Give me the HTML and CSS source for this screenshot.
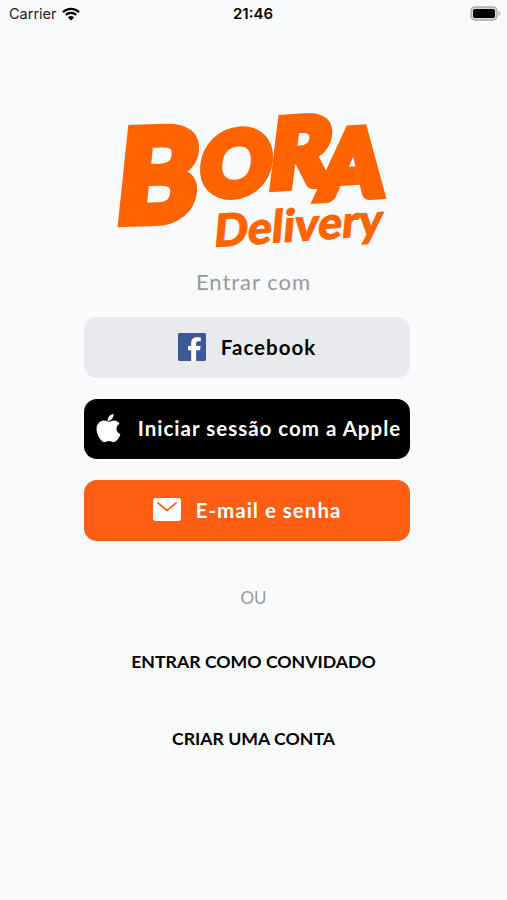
FILE: index.html
```html
<!DOCTYPE html>
<html lang="pt-BR">
<head>
    <meta charset="UTF-8">
    <meta name="viewport" content="width=device-width, initial-scale=1.0">
    <title>Bora Delivery</title>
    <link rel="stylesheet" href="styles.css">
</head>
<body>

    <!-- Status bar -->
    <header class="status-bar">
        <div class="carrier">
            <span>Carrier</span>
            <svg class="wifi" viewBox="0 0 18 14" width="18" height="14">
                <path d="M1 5.2a11.4 11.4 0 0 1 16 0M3.8 8a7.4 7.4 0 0 1 10.4 0" fill="none" stroke="#000" stroke-width="2.3"/>
                <path d="M9 13.6L5.9 10.4a4.5 4.5 0 0 1 6.2 0z"/>
            </svg>
        </div>
        <span class="time">21:46</span>
        <svg class="battery" viewBox="0 0 31 15" width="31" height="15">
            <rect x="1" y="1" width="26" height="13" rx="4" fill="#dcdcdc" stroke="#aaa" stroke-width="1.4"/>
            <rect x="3" y="3" width="22" height="9" rx="1.8"/>
            <path d="M28.7 5.2v4.6a2.5 2.5 0 0 0 0-4.6z" fill="#aaa"/>
        </svg>
    </header>

    <main class="login">
        <svg class="logo" viewBox="112 105 284 150" width="284" height="150">
            <g class="logo-name">
                <text class="big" transform="translate(113 223) rotate(-2) skewX(-8) scale(.96 1)">B</text>
                <text class="o" transform="translate(199 197) rotate(-4) skewX(-9)">O</text>
                <text class="r" transform="translate(267 188) rotate(-4) skewX(-11)">R</text>
                <text class="a" transform="translate(318 199) rotate(-4) skewX(-10) scale(.96 1)">A</text>
            </g>
            <text class="logo-sub" transform="translate(213 247) rotate(-4) skewX(-9)" textLength="169" lengthAdjust="spacingAndGlyphs">Delivery</text>
        </svg>

        <p class="hint">Entrar com</p>

        <!-- Login options -->
        <div class="options">
            <button class="btn facebook">
                <svg viewBox="0 0 28 28" width="28" height="28">
                    <rect width="28" height="28" rx="1.6" fill="#3b5998"/>
                    <path d="M13.200 28V17.200H10V13h3.200V10c0-3.700 2.300-5.700 6-5.700 1.500 0 3 .1 3.600.2v3.800h-2.400c-1.800 0-2.300.8-2.300 2.100V13h4.500l-.6 4.200h-3.900V28z" fill="#fff"/>
                </svg>
                <span>Facebook</span>
            </button>
            <button class="btn apple">
                <svg viewBox="0 0 25 28" width="25" height="28">
                    <path d="M17.500 0c.2 2-.6 3.700-1.600 4.900-1 1.200-2.600 2.100-4.200 2-.2-1.900.7-3.700 1.700-4.800C14.500.9 16.200.1 17.500 0z" fill="#fff"/>
                    <path d="M23.500 9.700c-1.800 1.100-3 2.800-3 5.100 0 2.500 1.500 4.600 3.900 5.500-.5 1.500-1.200 2.900-2.100 4.200-1.300 1.900-2.600 3.500-4.500 3.500s-2.500-1.100-4.800-1.100c-2.200 0-3 1.100-4.800 1.200-1.900.1-3.300-1.900-4.600-3.800C1 20.500-.9 13.800 2 9.900c1.300-2 3.500-3.300 5.800-3.300 2.200 0 3.600 1.200 5.100 1.200s2.900-1.400 5.500-1.300c2 .1 3.900 1.200 5.100 3.200z" fill="#fff"/>
                </svg>
                <span>Iniciar sessão com a Apple</span>
            </button>
            <button class="btn email">
                <svg viewBox="0 0 28 23" width="28" height="23">
                    <rect width="28" height="23" rx="3" fill="#fff"/>
                    <path d="M5 5l9 7.500L23 5" fill="none" stroke="#fc5e14" stroke-width="1.700" stroke-linecap="round"/>
                </svg>
                <span>E-mail e senha</span>
            </button>
        </div>

        <p class="or">OU</p>
        <a class="link guest" href="#">ENTRAR COMO CONVIDADO</a>
        <a class="link signup" href="#">CRIAR UMA CONTA</a>
    </main>

</body>
</html>
```
FILE: styles.css
```css
* {
    box-sizing: border-box;
}

body {
    margin: 0;
    min-height: 900px;
    background-color: #f9fafc;
    color: #000;
    font-family: Lato, "Open Sans", sans-serif;
}

.status-bar {
    display: grid;
    grid-template-columns: 1fr auto 1fr;
    align-items: center;
    height: 27px;
    padding: 0 6px 0 9px;
    font-family: Inter, sans-serif;
    font-size: 14.5px;
}

.carrier {
    display: flex;
    align-items: center;
    gap: 5px;
    color: #222;
}

.time {
    margin-right: 4px;
    font-size: 15px;
    font-weight: 600;
}

.battery {
    justify-self: end;
}

.login {
    display: flex;
    flex-direction: column;
    align-items: center;
    padding-top: 78px;
}

.logo {
    overflow: visible;
    fill: #ff6400;
    stroke: #ff6400;
    font-weight: 900;
}

.logo-name {
    stroke-width: 9;
}

.big {
    font-size: 128px;
}

.o {
    font-size: 86px;
}

.r {
    font-size: 93px;
}

.a {
    font-size: 92px;
}

.logo-sub {
    font-size: 45px;
    stroke-width: 1;
}

.hint {
    margin: 11px 0 0;
    color: #98999b;
    font-size: 22px;
    line-height: 32px;
    letter-spacing: 1px;
}

.options {
    display: flex;
    flex-direction: column;
    gap: 21px;
    width: 326px;
    margin: 19px 13px 0 0;
}

.btn {
    display: flex;
    align-items: center;
    justify-content: center;
    gap: 15px;
    height: 60.5px;
    padding: 0 0 1px;
    border: none;
    border-radius: 13px;
    font-family: inherit;
    font-size: 20.5px;
    font-weight: 700;
    letter-spacing: 1px;
    white-space: nowrap;
    cursor: pointer;
}

.facebook {
    background: #e9eaed;
    color: #000;
}

.apple {
    gap: 17px;
    padding-left: 3px;
    background: #000;
    color: #fff;
}

.email {
    background: #fc5e14;
    color: #fff;
}

.or {
    margin: 45px 0 0;
    color: #98999b;
    font-size: 17px;
    line-height: 24px;
}

.link {
    color: #000;
    font-size: 17.700px;
    font-weight: 700;
    line-height: 24px;
    text-decoration: none;
}

.guest {
    margin-top: 40px;
}

.signup {
    margin-top: 53px;
}
```
